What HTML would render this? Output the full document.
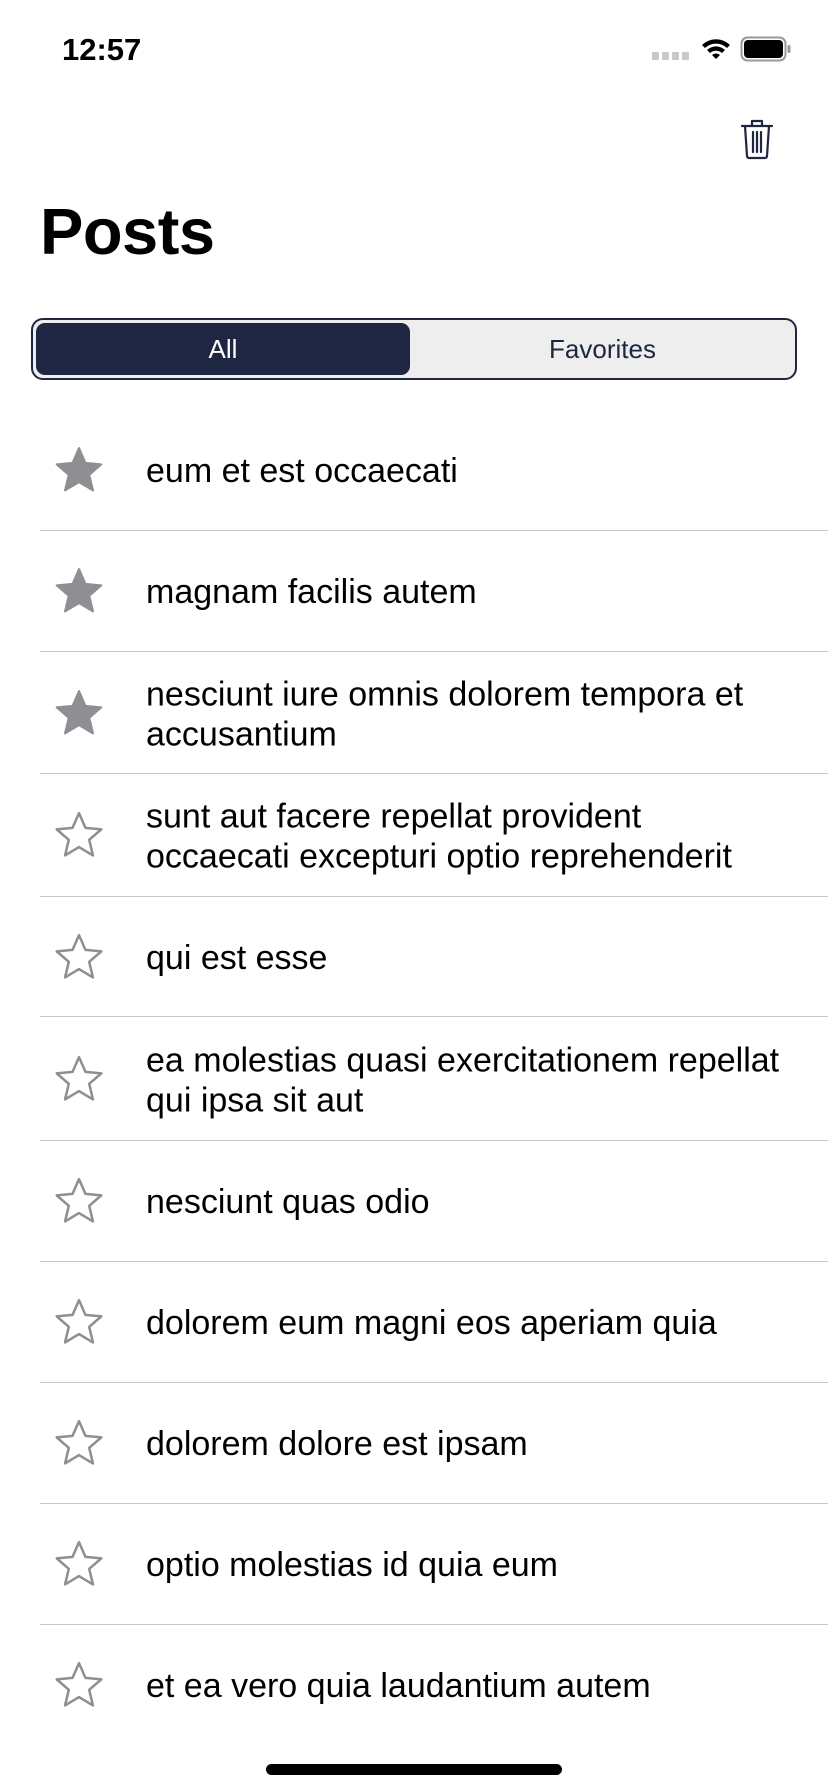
<!DOCTYPE html>
<html><head><meta charset="utf-8"><style>
*{margin:0;padding:0;box-sizing:border-box}
body{width:828px;height:1792px;background:#fff;font-family:"Liberation Sans",sans-serif;position:relative;overflow:hidden;color:#000}
.time{position:absolute;left:62px;top:32px;font-size:31px;font-weight:bold}
.title{position:absolute;left:40px;top:194px;font-size:65px;font-weight:bold;letter-spacing:-0.5px}
.seg{position:absolute;left:31px;top:318px;width:766px;height:62px;border:2px solid #1e2642;border-radius:12px;background:#eeeeef}
.sel{position:absolute;left:3px;top:3px;width:374px;height:52px;background:#1e2642;border-radius:9px;color:#fff;font-size:26px;text-align:center;line-height:52px}
.fav{position:absolute;left:377px;top:0;width:385px;height:58px;text-align:center;line-height:58px;font-size:26px;color:#1e2642}
.row{position:absolute;left:0;width:828px}
.row .t{position:absolute;left:146px;font-size:34px;line-height:40px;top:50%;transform:translateY(-48%);width:645px}
.row svg{position:absolute;left:54px;top:50%;margin-top:-26px}
.sep{position:absolute;left:40px;right:0;height:1px;background:#c8c8cc}
.home{position:absolute;left:266px;top:1764px;width:296px;height:11px;border-radius:6px;background:#000}
</style></head><body>
<div class="time">12:57</div>
<svg style="position:absolute;left:652px;top:47px" width="38" height="14"><rect x="0" y="5" width="7" height="8" rx="1" fill="#c7c7cc"/><rect x="10" y="5" width="7" height="8" rx="1" fill="#c7c7cc"/><rect x="20" y="5" width="7" height="8" rx="1" fill="#c7c7cc"/><rect x="30" y="5" width="7" height="8" rx="1" fill="#c7c7cc"/></svg>
<svg style="position:absolute;left:700px;top:36px" width="32" height="26" viewBox="0 0 32 26"><path d="M2 9a20 20 0 0 1 28 0l-3 3a16 16 0 0 0-22 0z M7 14a13 13 0 0 1 18 0l-3 3a9 9 0 0 0-12 0z M12 19a6 6 0 0 1 8 0l-4 4z" fill="#000"/></svg>
<svg style="position:absolute;left:740px;top:36px" width="52" height="26" viewBox="0 0 52 26"><rect x="1.5" y="1.5" width="44" height="23" rx="6" fill="none" stroke="#999" stroke-width="2"/><rect x="4" y="4" width="39" height="18" rx="4" fill="#000"/><rect x="47.5" y="9" width="3" height="8" rx="1.5" fill="#999"/></svg>
<svg style="position:absolute;left:740px;top:118px" width="34" height="42" viewBox="0 0 34 42" fill="none" stroke="#1e2642" stroke-linecap="round" stroke-linejoin="round"><path d="M2 8h30M12 8V3h10v5M5 8l2 30a2 2 0 0 0 2 2h16a2 2 0 0 0 2-2l2-30M13 14v20M17 14v20M21 14v20" stroke-width="2.2"/></svg>
<div class="title">Posts</div>
<div class="seg"><div class="sel">All</div><div class="fav">Favorites</div></div>

<div class="row" style="top:410px;height:120px"><svg width="50" height="52" viewBox="0 0 24 24"><path d="M12 1.5l3.1 7.1 7.6.7-5.8 5 1.8 7.5L12 17.8l-6.7 4 1.8-7.5-5.8-5 7.6-.7z" fill="#8e8e93" stroke="#8e8e93" stroke-width="1" stroke-linejoin="round"/></svg><div class="t">eum et est occaecati</div></div>
<div class="sep" style="top:530px"></div>
<div class="row" style="top:531px;height:120px"><svg width="50" height="52" viewBox="0 0 24 24"><path d="M12 1.5l3.1 7.1 7.6.7-5.8 5 1.8 7.5L12 17.8l-6.7 4 1.8-7.5-5.8-5 7.6-.7z" fill="#8e8e93" stroke="#8e8e93" stroke-width="1" stroke-linejoin="round"/></svg><div class="t">magnam facilis autem</div></div>
<div class="sep" style="top:651px"></div>
<div class="row" style="top:652px;height:121px"><svg width="50" height="52" viewBox="0 0 24 24"><path d="M12 1.5l3.1 7.1 7.6.7-5.8 5 1.8 7.5L12 17.8l-6.7 4 1.8-7.5-5.8-5 7.6-.7z" fill="#8e8e93" stroke="#8e8e93" stroke-width="1" stroke-linejoin="round"/></svg><div class="t">nesciunt iure omnis dolorem tempora et accusantium</div></div>
<div class="sep" style="top:773px"></div>
<div class="row" style="top:774px;height:122px"><svg width="50" height="52" viewBox="0 0 24 24"><path d="M12 1.5l3.1 7.1 7.6.7-5.8 5 1.8 7.5L12 17.8l-6.7 4 1.8-7.5-5.8-5 7.6-.7z" fill="none" stroke="#8e8e93" stroke-width="1.2" stroke-linejoin="round"/></svg><div class="t">sunt aut facere repellat provident occaecati excepturi optio reprehenderit</div></div>
<div class="sep" style="top:896px"></div>
<div class="row" style="top:897px;height:119px"><svg width="50" height="52" viewBox="0 0 24 24"><path d="M12 1.5l3.1 7.1 7.6.7-5.8 5 1.8 7.5L12 17.8l-6.7 4 1.8-7.5-5.8-5 7.6-.7z" fill="none" stroke="#8e8e93" stroke-width="1.2" stroke-linejoin="round"/></svg><div class="t">qui est esse</div></div>
<div class="sep" style="top:1016px"></div>
<div class="row" style="top:1017px;height:123px"><svg width="50" height="52" viewBox="0 0 24 24"><path d="M12 1.5l3.1 7.1 7.6.7-5.8 5 1.8 7.5L12 17.8l-6.7 4 1.8-7.5-5.8-5 7.6-.7z" fill="none" stroke="#8e8e93" stroke-width="1.2" stroke-linejoin="round"/></svg><div class="t">ea molestias quasi exercitationem repellat qui ipsa sit aut</div></div>
<div class="sep" style="top:1140px"></div>
<div class="row" style="top:1141px;height:120px"><svg width="50" height="52" viewBox="0 0 24 24"><path d="M12 1.5l3.1 7.1 7.6.7-5.8 5 1.8 7.5L12 17.8l-6.7 4 1.8-7.5-5.8-5 7.6-.7z" fill="none" stroke="#8e8e93" stroke-width="1.2" stroke-linejoin="round"/></svg><div class="t">nesciunt quas odio</div></div>
<div class="sep" style="top:1261px"></div>
<div class="row" style="top:1262px;height:120px"><svg width="50" height="52" viewBox="0 0 24 24"><path d="M12 1.5l3.1 7.1 7.6.7-5.8 5 1.8 7.5L12 17.8l-6.7 4 1.8-7.5-5.8-5 7.6-.7z" fill="none" stroke="#8e8e93" stroke-width="1.2" stroke-linejoin="round"/></svg><div class="t">dolorem eum magni eos aperiam quia</div></div>
<div class="sep" style="top:1382px"></div>
<div class="row" style="top:1383px;height:120px"><svg width="50" height="52" viewBox="0 0 24 24"><path d="M12 1.5l3.1 7.1 7.6.7-5.8 5 1.8 7.5L12 17.8l-6.7 4 1.8-7.5-5.8-5 7.6-.7z" fill="none" stroke="#8e8e93" stroke-width="1.2" stroke-linejoin="round"/></svg><div class="t">dolorem dolore est ipsam</div></div>
<div class="sep" style="top:1503px"></div>
<div class="row" style="top:1504px;height:120px"><svg width="50" height="52" viewBox="0 0 24 24"><path d="M12 1.5l3.1 7.1 7.6.7-5.8 5 1.8 7.5L12 17.8l-6.7 4 1.8-7.5-5.8-5 7.6-.7z" fill="none" stroke="#8e8e93" stroke-width="1.2" stroke-linejoin="round"/></svg><div class="t">optio molestias id quia eum</div></div>
<div class="sep" style="top:1624px"></div>
<div class="row" style="top:1625px;height:120px"><svg width="50" height="52" viewBox="0 0 24 24"><path d="M12 1.5l3.1 7.1 7.6.7-5.8 5 1.8 7.5L12 17.8l-6.7 4 1.8-7.5-5.8-5 7.6-.7z" fill="none" stroke="#8e8e93" stroke-width="1.2" stroke-linejoin="round"/></svg><div class="t">et ea vero quia laudantium autem</div></div>
<div class="home"></div>
</body></html>
